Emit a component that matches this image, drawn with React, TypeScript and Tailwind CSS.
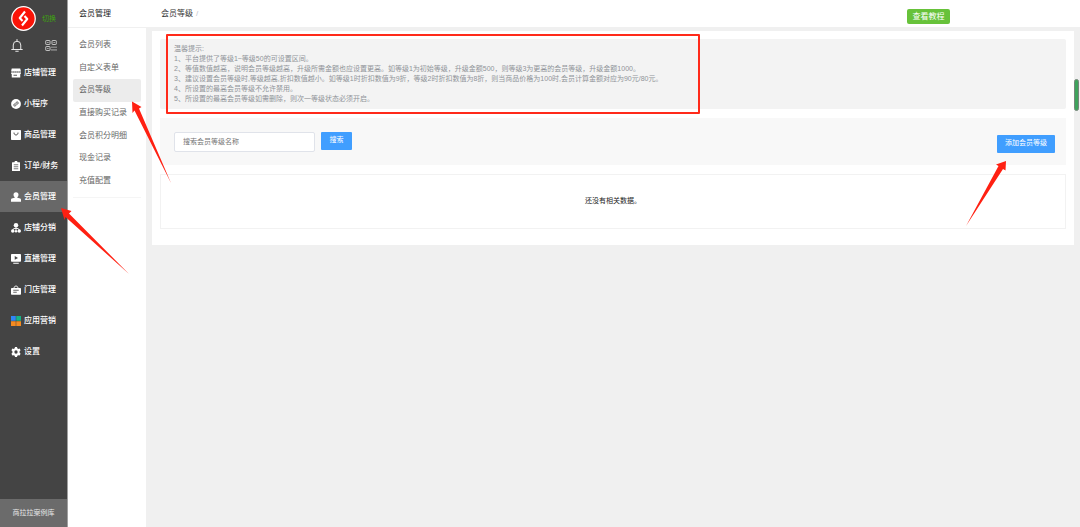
import React from "react";

type IconName =
  | "shop"
  | "mini"
  | "goods"
  | "order"
  | "member"
  | "share"
  | "live"
  | "store"
  | "apps"
  | "settings";

const mainMenu: { label: string; icon: IconName; active?: boolean }[] = [
  { label: "店铺管理", icon: "shop" },
  { label: "小程序", icon: "mini" },
  { label: "商品管理", icon: "goods" },
  { label: "订单/财务", icon: "order" },
  { label: "会员管理", icon: "member", active: true },
  { label: "店铺分销", icon: "share" },
  { label: "直播管理", icon: "live" },
  { label: "门店管理", icon: "store" },
  { label: "应用营销", icon: "apps" },
  { label: "设置", icon: "settings" },
];

const subMenu = [
  "会员列表",
  "自定义表单",
  "会员等级",
  "直接购买记录",
  "会员积分明细",
  "现金记录",
  "充值配置",
];

const tips = [
  "温馨提示:",
  "1、平台提供了等级1~等级50的可设置区间。",
  "2、等值数值越高，说明会员等级越高，升级所需金额也应设置更高。如等级1为初始等级，升级金额500，则等级3为更高的会员等级，升级金额1000。",
  "3、建议设置会员等级时,等级越高,折扣数值越小。如等级1时折扣数值为9折，等级2时折扣数值为8折，则当商品价格为100时,会员计算金额对应为90元/80元。",
  "4、所设置的最高会员等级不允许禁用。",
  "5、所设置的最高会员等级如需删除，则次一等级状态必须开启。",
];

const DARK = "#444444";

const shapes: Record<IconName, React.ReactNode> = {
  shop: (
    <>
      <path d="M1.500 1h17L20 7.500H0z" />
      <path d="M0 8.500h20v2a3 3 0 0 1-1.500 2V19h-17v-6.500a3 3 0 0 1-1.500-2z" />
      <path d="M0 8h20" stroke={DARK} strokeWidth="1.400" strokeDasharray="3 1" />
      <path d="M5 14.500h7" stroke={DARK} strokeWidth="1.800" />
    </>
  ),
  mini: (
    <>
      <circle cx="10" cy="10" r="9.800" />
      <path
        d="M7.600 9.600a2.300 2.300 0 1 0 2.400 2.600V7.800a2.300 2.300 0 1 1 2.400 2.600"
        fill="none"
        stroke={DARK}
        strokeWidth="1.600"
        strokeLinecap="round"
      />
    </>
  ),
  goods: (
    <>
      <rect x="0" y="0" width="20" height="20" rx="1.500" />
      <path d="M6 6c0 5.500 8 5.500 8 0" fill="none" stroke={DARK} strokeWidth="2" strokeLinecap="round" />
    </>
  ),
  order: (
    <>
      <path d="M3 2.500h4a3 3 0 0 1 6 0h4a1 1 0 0 1 1 1V19a1 1 0 0 1-1 1H3a1 1 0 0 1-1-1V3.500a1 1 0 0 1 1-1z" />
      <path d="M5.500 7.500h9M5.500 11.500h9M5.500 15.500h9" stroke={DARK} strokeWidth="1.400" />
    </>
  ),
  member: (
    <path d="M10 0.500a5 5 0 0 1 5 5q0 3-2.400 5v1.200l6 1.500q1.400.6 1.400 2.300v4H0v-4q0-1.700 1.400-2.300l6-1.500v-1.200Q5 8.500 5 5.500a5 5 0 0 1 5-5z" />
  ),
  share: (
    <>
      <circle cx="10" cy="4.500" r="4.500" />
      <circle cx="3.500" cy="16" r="3.500" />
      <circle cx="10" cy="16.500" r="2.500" />
      <circle cx="16.500" cy="16" r="3.500" />
      <path d="M10 8v6M3.500 14l2-3h9l2 3" fill="none" stroke="white" strokeWidth="1.800" />
    </>
  ),
  live: (
    <>
      <rect x="0" y="0" width="20" height="15.500" rx="1.500" />
      <path d="M4.500 18.500h11" stroke="white" strokeWidth="2" />
      <path d="M7.500 4l6.500 3.800-6.500 3.800z" fill={DARK} />
    </>
  ),
  store: (
    <>
      <path d="M6 6V4.500L10 1.500l4 3V6" fill="none" stroke="white" strokeWidth="1.800" />
      <rect x="0" y="6" width="20" height="13.500" rx="1.500" />
      <path d="M4.500 10.500h11M4.500 14.500h7" stroke={DARK} strokeWidth="1.600" />
    </>
  ),
  apps: (
    <>
      <rect x="0" y="0" width="9.500" height="9.500" fill="#2f86f6" />
      <rect x="10.500" y="0" width="9.500" height="9.500" fill="#16b486" />
      <rect x="0" y="10.500" width="9.500" height="9.500" fill="#f58a1f" />
      <rect x="10.500" y="10.500" width="9.500" height="9.500" fill="#f58a1f" />
    </>
  ),
  settings: (
    <>
      <path d="M8 0h4l.6 2.700 1.900 1.100 2.700-.9 2 3.500-2 1.900v3.400l2 1.900-2 3.500-2.700-.8-1.900 1.100L12 20H8l-.6-2.600-1.900-1.100-2.700.8-2-3.500 2-1.900V8.300l-2-1.900 2-3.500 2.700.9 1.900-1.100z" />
      <circle cx="10" cy="10" r="3.300" fill={DARK} />
    </>
  ),
};

function MenuIcon({ name }: { name: IconName }) {
  return (
    <svg viewBox="0 0 20 20" className="size-[10px] shrink-0 fill-white" aria-hidden="true">
      {shapes[name]}
    </svg>
  );
}

function Logo() {
  return (
    <svg viewBox="0 0 50 50" className="size-[25px]" aria-hidden="true">
      <circle cx="25" cy="25" r="23.500" fill="#fa1408" stroke="white" strokeWidth="2.500" />
      <path
        d="M28 11L17.500 24L23 30M22 39L32.500 26L27 20"
        fill="none"
        stroke="white"
        strokeWidth="4.200"
        strokeLinejoin="round"
      />
    </svg>
  );
}

function BellIcon() {
  return (
    <svg viewBox="0 0 24 26" className="h-[13px] w-[12px]" fill="none" stroke="#e8e8e8" strokeWidth="2" aria-hidden="true">
      <path d="M12 1v3M1.500 21h21M4.500 21v-9a7.500 7.500 0 0 1 15 0v9M9.500 24.500h5" strokeLinecap="round" />
    </svg>
  );
}

function QrIcon() {
  return (
    <svg viewBox="0 0 24 22" className="h-[11px] w-[12px]" fill="none" stroke="#cfcfcf" strokeWidth="1.800" aria-hidden="true">
      <rect x="1.500" y="1" width="8.500" height="8" rx="1" />
      <rect x="14" y="1" width="8.500" height="8" rx="1" />
      <rect x="1.500" y="13" width="8.500" height="8" rx="1" />
      <path d="M4.500 5h2.500M17 5h2.500M4.500 17h2.500M14 13v3M18 13v3M22 13v3M14 18v3.500M18 18v3.500M22 18v3.500" />
    </svg>
  );
}

export default function App() {
  return (
    <div className="relative flex min-h-screen bg-[#f0f0f0] font-['Liberation_Sans','Noto_Sans_CJK_SC',sans-serif] text-[7px] text-[#333333]">
      <aside className="flex w-[68px] shrink-0 flex-col border-r border-[#a0a0a0] bg-[#444444] text-white">
        <div className="flex h-9 items-end gap-[6px] pb-[5px] pl-[11px]">
          <Logo />
          <a href="#switch" className="pb-[6px] text-[7px] leading-[12px] text-[#3fa80c]">
            切换
          </a>
        </div>
        <div className="flex h-[21px] items-center justify-between pr-[10px] pb-[2px] pl-[11px]">
          <button type="button" aria-label="消息">
            <BellIcon />
          </button>
          <button type="button" aria-label="二维码">
            <QrIcon />
          </button>
        </div>
        <nav className="flex flex-col">
          {mainMenu.map((item) => (
            <a
              key={item.label}
              href="#menu"
              className={`flex h-[31px] items-center gap-[3px] pl-[11px] text-[8px] font-medium whitespace-nowrap ${item.active ? "bg-[#686868]" : ""}`}
            >
              <MenuIcon name={item.icon} />
              {item.label}
            </a>
          ))}
        </nav>
        <div className="mt-auto flex h-7 items-center justify-center bg-[#6b6b6b] text-[7px] text-[#e8e8e8]">
          商拉拉案例库
        </div>
      </aside>

      <section className="w-[78px] shrink-0 bg-white">
        <h2 className="flex h-7 items-center border-b border-[#f0f0f0] pl-[11px] text-[8px] text-[#222222]">会员管理</h2>
        <nav className="mx-[5px] grid h-[170px] grid-rows-7 border-b border-[#f5f5f5] pt-[6px] pb-[5px] text-[8px] text-[#666666]">
          {subMenu.map((label) => (
            <a
              key={label}
              href="#sub"
              className={`flex items-center rounded-[2px] pl-[6px] whitespace-nowrap ${label === "会员等级" ? "bg-[#ececec]" : ""}`}
            >
              {label}
            </a>
          ))}
        </nav>
      </section>

      <div className="min-w-0 flex-1">
        <header className="flex h-[27px] items-center justify-between bg-white pr-[130px] pl-[15px]">
          <div className="flex gap-[3px] text-[8px]">
            <h1>会员等级</h1>
            <span className="text-[#c0c4cc]">/</span>
          </div>
          <button
            type="button"
            className="mt-[6px] h-[15px] w-[43px] rounded-[2px] bg-[#67c23a] text-[8px] leading-[15px] text-white"
          >
            查看教程
          </button>
        </header>

        <main className="mt-1 mr-[6px] ml-[6px] flex flex-col gap-[9px] bg-white px-2 pt-[8px] pb-4">
          <section className="rounded-[2px] bg-[#f3f3f3] px-[14px] py-[5px] leading-[10px] text-[#909399]">
            {tips.map((tip) => (
              <p key={tip}>{tip}</p>
            ))}
          </section>

          <form className="flex h-[47px] items-center justify-between bg-[#f8f8f8] pr-[11px] pl-[14px]">
            <div className="flex gap-[6px]">
              <input
                type="text"
                aria-label="会员等级名称"
                placeholder="搜索会员等级名称"
                className="h-5 w-[141px] rounded-[2px] border border-[#e0e3ea] bg-white px-2 text-[7px] outline-none placeholder:text-[#757575]"
              />
              <button type="button" className="h-[18px] w-[31px] rounded-[1px] bg-[#409eff] text-white">
                搜索
              </button>
            </div>
            <button type="button" className="mt-1 h-[18px] w-[58px] rounded-[1px] bg-[#409eff] text-white">
              添加会员等级
            </button>
          </form>

          <div className="flex h-[55px] items-center justify-center border border-[#f2f2f2] text-[#222222]">
            还没有相关数据。
          </div>
        </main>
      </div>

      <div className="pointer-events-none absolute top-[34px] left-[166px] h-[80px] w-[534px] rounded-[1px] border-2 border-[#ff2a1a]" />

      <svg className="pointer-events-none absolute top-0 left-0 h-[280px] w-[180px]" viewBox="0 0 180 280" fill="#ff2012" aria-hidden="true">
        <path d="M132 101.500L141.500 107L139 108.500L171 183L134.500 110.500L132.500 113z" />
        <path d="M61 208L71.500 211L69 213.500L129 274L65.500 217L64.500 220z" />
      </svg>
      <svg className="pointer-events-none absolute top-[155px] right-[70px] h-[75px] w-[50px]" viewBox="0 0 50 75" fill="#ff2012" aria-hidden="true">
        <path d="M46 6L45.500 15.500L43 14L6 71L38.500 11L36 9.500z" />
      </svg>
      <div className="pointer-events-none absolute top-[79px] right-[1px] h-8 w-[5px] rounded-full border border-[#77857b] bg-[#3fa35c]" />
    </div>
  );
}
